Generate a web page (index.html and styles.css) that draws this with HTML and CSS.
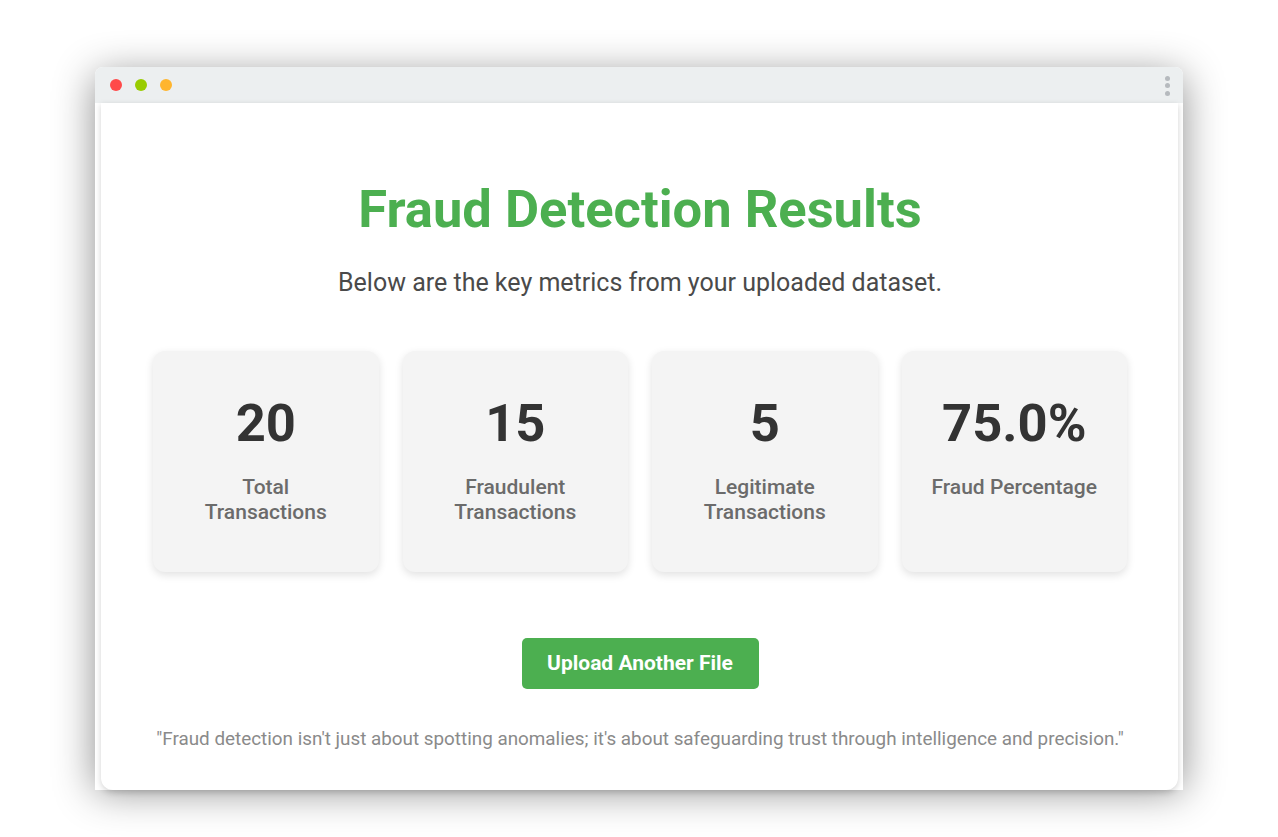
FILE: index.html
```html
<!DOCTYPE html>
<html>
<head>
<meta charset="utf-8">
<link rel="stylesheet" href="styles.css">
</head>
<body>
<div class="window">
  <div class="titlebar">
    <div class="dots">
      <span class="dot red"></span>
      <span class="dot green"></span>
      <span class="dot orange"></span>
    </div>
    <div class="menu">
      <span></span><span></span><span></span>
    </div>
  </div>
  <div class="page">
    <div class="card">
      <h1 class="title">Fraud Detection Results</h1>
      <p class="subtitle">Below are the key metrics from your uploaded dataset.</p>
      <div class="metrics">
        <div class="metric">
          <div class="value">20</div>
          <div class="label">Total<br>Transactions</div>
        </div>
        <div class="metric">
          <div class="value">15</div>
          <div class="label">Fraudulent<br>Transactions</div>
        </div>
        <div class="metric">
          <div class="value">5</div>
          <div class="label">Legitimate<br>Transactions</div>
        </div>
        <div class="metric">
          <div class="value">75.0%</div>
          <div class="label">Fraud Percentage</div>
        </div>
      </div>
      <div class="actions">
        <a class="button" href="#">Upload Another File</a>
      </div>
      <p class="quote">"Fraud detection isn't just about spotting anomalies; it's about safeguarding trust through intelligence and precision."</p>
    </div>
  </div>
</div>
</body>
</html>
```

FILE: styles.css
```css
* { box-sizing: border-box; }
html, body {
  margin: 0;
  padding: 0;
  background: #ffffff;
  font-family: Roboto, "Liberation Sans", Arial, sans-serif;
}
body {
  padding: 67px 95px 0 95px;
  height: 837px;
  overflow: hidden;
}
.window {
  width: 1088px;
  height: 716px;
  border-radius: 8px 8px 0 0;
  background: #ffffff;
  box-shadow: 0 8px 40px rgba(0, 0, 0, 0.45);
  display: flex;
  flex-direction: column;
}
.titlebar {
  height: 36px;
  background: #eceff0;
  border-radius: 8px 8px 0 0;
  display: flex;
  align-items: center;
  justify-content: space-between;
  padding: 0 13px 0 15px;
  flex-shrink: 0;
}
.dots { display: flex; gap: 13px; }
.dot {
  width: 12px;
  height: 12px;
  border-radius: 50%;
  display: block;
}
.red { background: #ff4a4a; }
.green { background: #99cc00; }
.orange { background: #ffb52e; }
.menu {
  display: flex;
  flex-direction: column;
  gap: 2.5px;
  padding-top: 1px;
}
.menu span {
  width: 5px;
  height: 5px;
  border-radius: 50%;
  background: #b6babe;
  display: block;
}
.page {
  flex: 1;
  padding: 0 5px 0 6px;
  background: #ffffff;
}
.card {
  height: 687px;
  background: #ffffff;
  border-radius: 0 0 12px 12px;
  box-shadow: 0 2px 6px rgba(0, 0, 0, 0.18);
  padding: 76px 51px 0 52px;
  text-align: center;
}
.title {
  margin: 0;
  color: #4caf50;
  font-size: 52.5px;
  font-weight: 700;
  line-height: 60px;
}
.subtitle {
  margin: 29px 0 0;
  color: #4a4a4a;
  font-size: 25px;
  line-height: 30px;
}
.metrics {
  margin-top: 53px;
  display: grid;
  grid-template-columns: repeat(4, 1fr);
  gap: 24px;
}
.metric {
  height: 221px;
  background: #f4f4f4;
  border-radius: 12px;
  box-shadow: 0 3px 8px rgba(0, 0, 0, 0.12);
  padding-top: 42px;
}
.value {
  font-size: 52.5px;
  font-weight: 700;
  color: #333333;
  line-height: 60px;
}
.label {
  margin-top: 22px;
  font-size: 21px;
  font-weight: 500;
  color: #6b6b6b;
  line-height: 25px;
}
.actions {
  margin-top: 66px;
  display: flex;
  justify-content: center;
}
.button {
  display: block;
  width: 237px;
  height: 51px;
  line-height: 51px;
  background: #4caf50;
  color: #ffffff;
  border-radius: 5px;
  text-decoration: none;
  font-size: 21px;
  font-weight: 700;
}
.quote {
  margin: 38px -20px 0;
  color: #8a8a8a;
  font-size: 18.85px;
  line-height: 24px;
  white-space: nowrap;
}
```
